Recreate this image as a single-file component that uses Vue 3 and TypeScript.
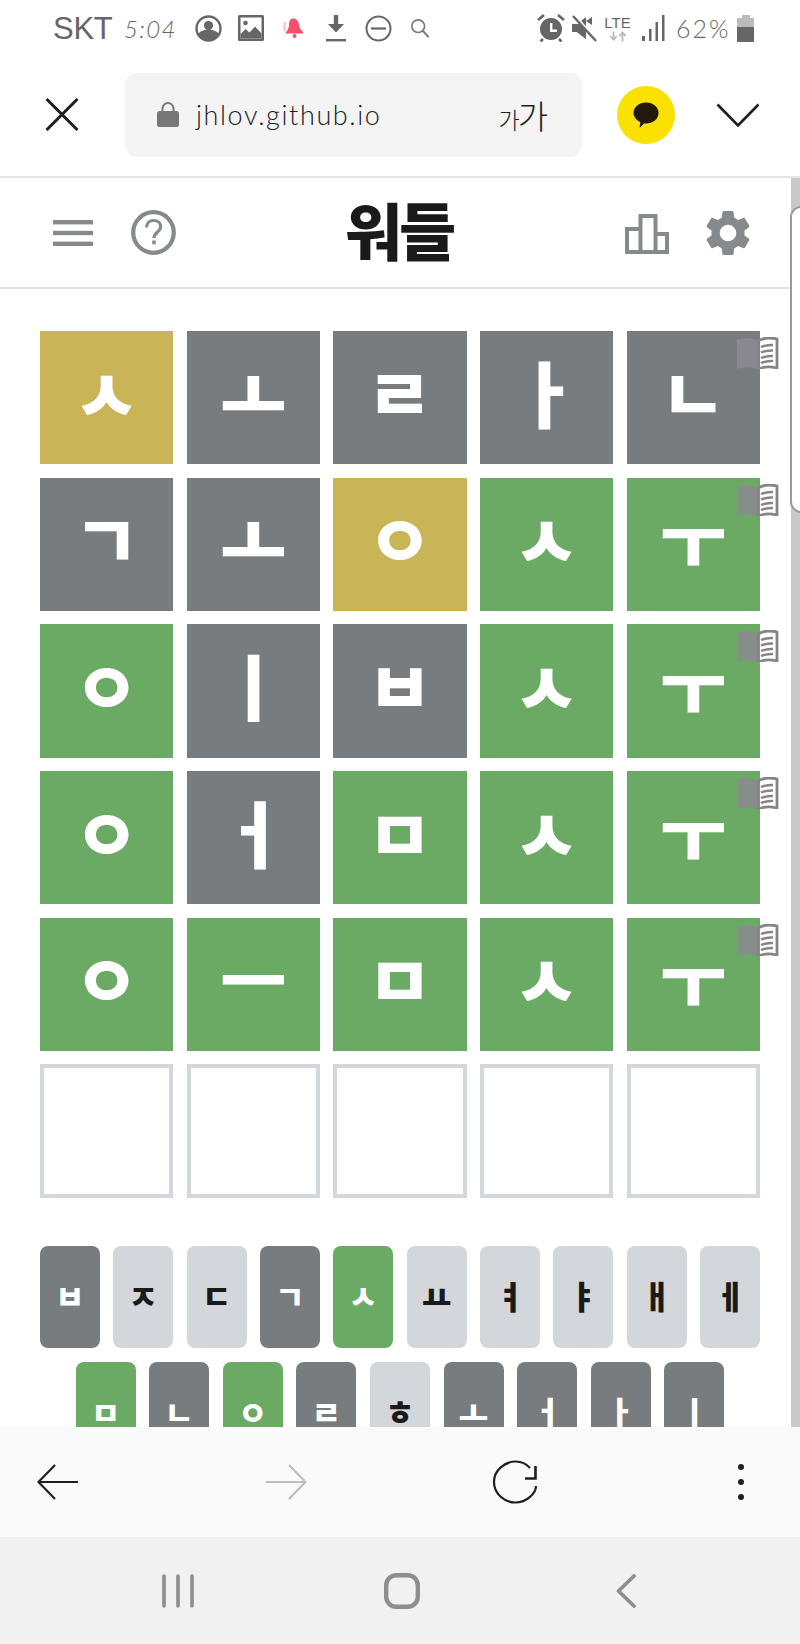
<script setup lang="ts">
type TileState = "present" | "absent" | "correct" | "empty";
type KeyState = "absent" | "correct" | "unused";

interface Tile {
  letter: string;
  state: TileState;
}

const tile = (letter: string, code: string): Tile => ({
  letter,
  state: code === "Y" ? "present" : code === "G" ? "correct" : "absent",
});

const board: Tile[][] = [
  [tile("ㅅ", "Y"), tile("ㅗ", "A"), tile("ㄹ", "A"), tile("ㅏ", "A"), tile("ㄴ", "A")],
  [tile("ㄱ", "A"), tile("ㅗ", "A"), tile("ㅇ", "Y"), tile("ㅅ", "G"), tile("ㅜ", "G")],
  [tile("ㅇ", "G"), tile("ㅣ", "A"), tile("ㅂ", "A"), tile("ㅅ", "G"), tile("ㅜ", "G")],
  [tile("ㅇ", "G"), tile("ㅓ", "A"), tile("ㅁ", "G"), tile("ㅅ", "G"), tile("ㅜ", "G")],
  [tile("ㅇ", "G"), tile("ㅡ", "G"), tile("ㅁ", "G"), tile("ㅅ", "G"), tile("ㅜ", "G")],
  Array.from({ length: 5 }, () => ({ letter: "", state: "empty" as TileState })),
];

const keyRows: { letter: string; state: KeyState }[][] = [
  [
    { letter: "ㅂ", state: "absent" },
    { letter: "ㅈ", state: "unused" },
    { letter: "ㄷ", state: "unused" },
    { letter: "ㄱ", state: "absent" },
    { letter: "ㅅ", state: "correct" },
    { letter: "ㅛ", state: "unused" },
    { letter: "ㅕ", state: "unused" },
    { letter: "ㅑ", state: "unused" },
    { letter: "ㅐ", state: "unused" },
    { letter: "ㅔ", state: "unused" },
  ],
  [
    { letter: "ㅁ", state: "correct" },
    { letter: "ㄴ", state: "absent" },
    { letter: "ㅇ", state: "correct" },
    { letter: "ㄹ", state: "absent" },
    { letter: "ㅎ", state: "unused" },
    { letter: "ㅗ", state: "absent" },
    { letter: "ㅓ", state: "absent" },
    { letter: "ㅏ", state: "absent" },
    { letter: "ㅣ", state: "absent" },
  ],
];
</script>

<template>
  <div class="phone">
    <div class="status-bar">
      <span class="carrier">SKT</span>
      <span class="clock">5:04</span>
      <svg class="st-person" viewBox="0 0 27 27">
        <circle cx="13.5" cy="13.5" r="12" fill="none" stroke="#666" stroke-width="2.4" />
        <circle cx="13.5" cy="10.5" r="4.6" fill="#666" />
        <path d="M3 19c3-3.5 7-4.5 10.500-4.500S21 15.500 24 19c-2 4-6 7-10.500 7S5 23 3 19z" fill="#666" />
      </svg>
      <svg class="st-image" viewBox="0 0 26 26">
        <rect width="26" height="26" rx="1.500" fill="#666" />
        <rect x="2.500" y="2.500" width="21" height="21" fill="#fff" />
        <circle cx="7.500" cy="8" r="2.300" fill="#666" />
        <path d="M2.500 19l5-5 4 3.500 5.500-6 6.500 7v5h-21z" fill="#666" />
      </svg>
      <svg class="st-bell" viewBox="0 0 22 22">
        <path d="M10 1.500c3.500 0 5.500 2.500 6 6 .4 3 1.500 5 4 7.500v1.500H3V15c2-2 2.800-4.500 3-7.500.2-3.500 1-6 4-6z" fill="#f6526f" />
        <circle cx="11.500" cy="19" r="2" fill="#f6526f" />
        <path d="M2.500 5C1 8 1 11 2 14" fill="none" stroke="#fac0ca" stroke-width="2" />
      </svg>
      <svg class="st-download" viewBox="0 0 20 27">
        <path d="M7.800 0h4.400v9H18l-8 8.500L2 9h5.800z" fill="#666" />
        <rect y="24" width="20" height="2.400" fill="#666" />
      </svg>
      <svg class="st-minus" viewBox="0 0 27 27">
        <circle cx="13.500" cy="13.500" r="12" fill="none" stroke="#666" stroke-width="2" />
        <rect x="6" y="12.400" width="15" height="2.200" fill="#666" />
      </svg>
      <svg class="st-search" viewBox="0 0 22 22">
        <circle cx="9" cy="9" r="7" fill="none" stroke="#777" stroke-width="1.800" />
        <path d="M14 14l6.500 7" fill="none" stroke="#777" stroke-width="2.200" />
      </svg>
      <span class="status-spacer"></span>
      <svg class="st-alarm" viewBox="0 0 28 28">
        <circle cx="14" cy="15" r="11" fill="#666" />
        <path d="M13 9h2.400v6.500H20v2.400h-7z" fill="#fff" />
        <path d="M1 6l6-5M27 6l-6-5M6 25l-2.500 2.500M22 25l2.500 2.500" stroke="#666" stroke-width="2.600" fill="none" />
      </svg>
      <svg class="st-mute" viewBox="0 0 25 27">
        <path d="M0 9h5l9-7v22l-9-7H0z" fill="#666" />
        <path d="M2 1l21 25" stroke="#fff" stroke-width="5" />
        <path d="M1 1l23 25" stroke="#666" stroke-width="2.400" />
        <path d="M14 6l6-4v8z" fill="#666" />
        <path d="M1 9h7l6 7v8l-9-7H1z" fill="#666" />
      </svg>
      <div class="st-lte">
        <span class="lte-text">LTE</span>
        <svg viewBox="0 0 20 11" class="lte-arrows">
          <path d="M5 0v7M1.500 5l3.500 4 3.500-4" fill="none" stroke="#bbb" stroke-width="2" />
          <path d="M15 11V3M11.500 5L15 1l3.500 4" fill="none" stroke="#bbb" stroke-width="2" />
        </svg>
      </div>
      <svg class="st-signal" viewBox="0 0 23 26">
        <rect x="0" y="21" width="3" height="5" fill="#666" />
        <rect x="7" y="14" width="2.500" height="12" fill="#666" />
        <rect x="13.500" y="7" width="2.500" height="19" fill="#666" />
        <rect x="20" y="0" width="2.500" height="26" fill="#666" />
      </svg>
      <span class="battery-text">62%</span>
      <div class="battery">
        <span class="battery-cap"></span>
        <span class="battery-empty"></span>
        <span class="battery-fill"></span>
      </div>
    </div>

    <div class="browser-bar">
      <svg class="close-icon" viewBox="0 0 34 33">
        <path d="M1.500 1l31 31M32.500 1l-31 31" fill="none" stroke="#1f1f1f" stroke-width="3" />
      </svg>
      <div class="url-box">
        <svg class="lock-icon" viewBox="0 0 22 25">
          <path d="M5.500 10V6.500a5.500 5.500 0 0 1 11 0V10" fill="none" stroke="#777" stroke-width="2" />
          <rect y="9" width="22" height="16" rx="2.500" fill="#777" />
        </svg>
        <span class="url-text">jhlov.github.io</span>
        <span class="font-size"><span class="font-size-small">가</span>가</span>
      </div>
      <div class="kakao">
        <svg viewBox="0 0 28 28">
          <path d="M14 1.500c7 0 12.500 4.500 12.500 10.500S21 22.500 14 22.500l-2 0-4.500 4.500.8-6C4 19 1.500 15.500 1.500 12 1.500 6 7 1.500 14 1.500z" fill="#211a0c" />
        </svg>
      </div>
      <svg class="chevron-icon" viewBox="0 0 44 24">
        <path d="M1.500 1.500L22 22.500 42.500 1.500" fill="none" stroke="#1f1f1f" stroke-width="2.600" />
      </svg>
    </div>

    <div class="viewport">
      <div class="page">
        <header class="game-header">
          <div class="header-side">
            <svg class="menu-icon" viewBox="0 0 40 26">
              <rect width="40" height="4.400" fill="#878a8c" />
              <rect y="10.800" width="40" height="4.400" fill="#878a8c" />
              <rect y="21.600" width="40" height="4.400" fill="#878a8c" />
            </svg>
            <svg class="help-icon" viewBox="0 0 45 45">
              <circle cx="22.500" cy="22.500" r="20.300" fill="none" stroke="#878a8c" stroke-width="4.200" />
              <path d="M15.500 17.500c0-4.500 3-7 7.200-7 4 0 7 2.500 7 6 0 5.500-6.700 5.500-6.700 11.500" fill="none" stroke="#878a8c" stroke-width="3.200" />
              <rect x="21.200" y="30.500" width="3.600" height="3.800" fill="#878a8c" />
            </svg>
          </div>
          <h1 class="title">워들</h1>
          <div class="header-side header-right">
            <svg class="stats-icon" viewBox="0 0 44 40">
              <path d="M2 38V15h13.500v23zM15.500 38V2h15v36zM30.500 38V20H42v18z" fill="none" stroke="#878a8c" stroke-width="4" />
            </svg>
            <svg class="gear-icon" viewBox="2.400 2.400 19.200 19.200">
              <path d="M19.140 12.940c.04-.3.06-.61.06-.94 0-.32-.02-.64-.07-.94l2.030-1.580c.18-.14.23-.41.12-.61l-1.920-3.320c-.12-.22-.37-.29-.59-.22l-2.390.96c-.5-.38-1.030-.7-1.620-.94L14.400 2.810c-.04-.24-.24-.41-.48-.41h-3.840c-.24 0-.43.17-.47.41L9.250 5.350C8.660 5.590 8.120 5.920 7.630 6.290L5.240 5.330c-.22-.08-.47 0-.59.22L2.740 8.870C2.620 9.080 2.660 9.340 2.860 9.480l2.030 1.580C4.840 11.360 4.800 11.690 4.800 12s.02.64.07.94l-2.030 1.580c-.18.14-.23.41-.12.61l1.920 3.320c.12.22.37.29.59.22l2.390-.96c.5.38 1.030.7 1.620.94l.36 2.540c.05.24.24.41.48.41h3.840c.24 0 .44-.17.47-.41l.36-2.540c.59-.24 1.130-.56 1.620-.94l2.390.96c.22.08.47 0 .59-.22l1.920-3.320c.12-.22.07-.47-.12-.61l-2.010-1.580zM12 15.600c-1.980 0-3.600-1.620-3.600-3.600s1.620-3.600 3.600-3.600 3.600 1.620 3.600 3.600-1.620 3.600-3.600 3.600z" fill="#878a8c" />
            </svg>
          </div>
        </header>

        <div class="board">
          <div v-for="(row, r) in board" :key="r" class="board-row">
            <div v-for="(cell, c) in row" :key="c" class="tile" :class="cell.state">
              {{ cell.letter }}
            </div>
            <svg v-if="r < 5" class="book" viewBox="0 0 42 32">
              <path d="M0 3c6-2.500 14-2.500 20 0v29c-6-2-14-2-20 0z" fill="#8b8b90" opacity="0.85" />
              <path d="M21 4c5-3 13-3.500 19-2v29c-6-1.500-14-1-19 1z" fill="none" stroke="#858585" stroke-width="2.800" />
              <path d="M24 10c4-1.800 8-2.200 12-2M24 15.500c4-1.800 8-2.200 12-2M24 21c4-1.800 8-2.200 12-2M24 26c4-1.800 8-2.200 12-2" fill="none" stroke="#858585" stroke-width="2.400" />
            </svg>
          </div>
        </div>

        <div class="keyboard">
          <div v-for="(row, r) in keyRows" :key="r" class="key-row">
            <div v-for="key in row" :key="key.letter" class="key" :class="key.state">
              {{ key.letter }}
            </div>
          </div>
        </div>
      </div>

      <div class="scroll-track"></div>
      <div class="edge-handle"></div>
    </div>

    <nav class="browser-nav">
      <svg class="nav-arrow" viewBox="0 0 42 36">
        <path d="M18 1L1.500 18 18 35M1.500 18H41" fill="none" stroke="#1f1f1f" stroke-width="2.200" />
      </svg>
      <svg class="nav-arrow" viewBox="0 0 42 36">
        <path d="M24 1l16.500 17L24 35M40.500 18H1" fill="none" stroke="#bdbdbd" stroke-width="2.200" />
      </svg>
      <svg class="nav-reload" viewBox="0 0 46 44">
        <path d="M38 8C34 3.500 29 1.500 24 1.500 12.500 1.500 2 10.500 2 22s10 20.500 21.500 20.500S44 33 44 26" fill="none" stroke="#1f1f1f" stroke-width="2.200" />
        <path d="M43.500 6v12.500H33" fill="none" stroke="#1f1f1f" stroke-width="2.600" />
      </svg>
      <div class="nav-dots"><span></span><span></span><span></span></div>
    </nav>

    <nav class="system-nav">
      <svg class="sys-recent" viewBox="0 0 32 34">
        <path d="M2 2v30M16 2v30M30 2v30" fill="none" stroke="#8e8e8e" stroke-width="3.600" stroke-linecap="round" />
      </svg>
      <svg class="sys-home" viewBox="0 0 36 36">
        <rect x="2.200" y="2.200" width="31.600" height="31.600" rx="10" fill="none" stroke="#8e8e8e" stroke-width="4.400" />
      </svg>
      <svg class="sys-back" viewBox="0 0 20 34">
        <path d="M18 2L2.500 17 18 32" fill="none" stroke="#8e8e8e" stroke-width="3.800" stroke-linecap="round" stroke-linejoin="round" />
      </svg>
    </nav>
  </div>
</template>

<style scoped>
.phone {
  width: 800px;
  height: 1644px;
  display: flex;
  flex-direction: column;
  overflow: hidden;
  background: #fff;
  font-family: "Noto Sans CJK KR", "Noto Sans", sans-serif;
}

.status-bar {
  height: 56px;
  flex: none;
  display: flex;
  align-items: center;
  padding: 0 46px 0 53px;
  box-sizing: border-box;
  color: #666;
}

.status-bar svg {
  flex: none;
  display: block;
}

.carrier {
  font-family: "Liberation Sans", sans-serif;
  font-size: 31px;
  letter-spacing: -0.3px;
  width: 60px;
  margin-top: 1px;
}

.clock {
  font-family: "Lato", sans-serif;
  font-weight: 300;
  font-style: italic;
  font-size: 24px;
  letter-spacing: 1.3px;
  width: 55px;
  margin-left: 11px;
}

.st-person {
  width: 27px;
  height: 27px;
  margin-left: 16px;
}

.st-image {
  width: 26px;
  height: 26px;
  margin-left: 16px;
}

.st-bell {
  width: 22px;
  height: 22px;
  margin-left: 19px;
}

.st-download {
  width: 20px;
  height: 27px;
  margin-left: 21px;
}

.st-minus {
  width: 27px;
  height: 27px;
  margin-left: 19px;
}

.st-search {
  width: 20px;
  height: 20px;
  margin-left: 18px;
}

.status-spacer {
  flex: 1;
}

.st-alarm {
  width: 28px;
  height: 28px;
}

.st-mute {
  width: 25px;
  height: 27px;
  margin-left: 7px;
}

.st-lte {
  width: 25px;
  margin-left: 8px;
  display: flex;
  flex-direction: column;
  align-items: center;
}

.lte-text {
  font-family: "Liberation Sans", sans-serif;
  font-size: 15px;
  line-height: 15px;
  color: #666;
}

.lte-arrows {
  width: 18px;
  height: 11px;
  margin-top: 1px;
}

.st-signal {
  width: 23px;
  height: 26px;
  margin-left: 12px;
}

.battery-text {
  font-family: "Lato", sans-serif;
  font-weight: 300;
  font-size: 25px;
  letter-spacing: 2px;
  width: 51px;
  margin-left: 11px;
}

.battery {
  width: 17px;
  height: 27px;
  margin-left: 10px;
  display: flex;
  flex-direction: column;
  align-items: center;
}

.battery-cap {
  width: 8px;
  height: 3px;
  background: #bbb;
}

.battery-empty {
  width: 100%;
  height: 9px;
  background: #bbb;
}

.battery-fill {
  width: 100%;
  flex: 1;
  background: #666;
}

.browser-bar {
  height: 122px;
  flex: none;
  display: flex;
  align-items: center;
  box-sizing: border-box;
  padding-bottom: 3px;
  border-bottom: 2px solid #e4e4e4;
}

.close-icon {
  width: 34px;
  height: 33px;
  margin-left: 45px;
  flex: none;
}

.url-box {
  width: 457px;
  height: 84px;
  margin-left: 46px;
  background: #f4f4f5;
  border-radius: 12px;
  display: flex;
  align-items: center;
  padding: 0 36px 0 32px;
  box-sizing: border-box;
}

.lock-icon {
  width: 22px;
  height: 25px;
  flex: none;
}

.url-text {
  font-family: "Lato", sans-serif;
  font-weight: 300;
  font-size: 27px;
  letter-spacing: 1.6px;
  color: #1c1c1c;
  margin-left: 17px;
  flex: 1;
}

.font-size {
  font-size: 33px;
  font-weight: 300;
  letter-spacing: -2px;
  color: #222;
}

.font-size-small {
  font-size: 23px;
}

.kakao {
  width: 58px;
  height: 58px;
  margin-left: 35px;
  border-radius: 50%;
  background: #fae100;
  display: flex;
  align-items: center;
  justify-content: center;
}

.kakao svg {
  width: 28px;
  height: 28px;
}

.chevron-icon {
  width: 44px;
  height: 24px;
  margin-left: 41px;
}

.viewport {
  flex: 1;
  min-height: 0;
  display: flex;
  position: relative;
  overflow: hidden;
}

.page {
  width: 791px;
  flex: none;
}

.scroll-track {
  flex: 1;
  background: #c9c9c9;
}

.edge-handle {
  position: absolute;
  right: -12px;
  top: 28px;
  width: 22px;
  height: 307px;
  box-sizing: border-box;
  background: #fff;
  border: 2px solid #9a9a9a;
  border-radius: 14px;
}

.game-header {
  height: 111px;
  box-sizing: border-box;
  border-bottom: 2px solid #e2e2e2;
  display: grid;
  grid-template-columns: 1fr auto 1fr;
  align-items: center;
  padding: 0 41px 0 53px;
}

.header-side {
  display: flex;
  align-items: center;
}

.header-right {
  justify-content: flex-end;
}

.menu-icon {
  width: 40px;
  height: 26px;
}

.help-icon {
  width: 45px;
  height: 45px;
  margin-left: 38px;
}

.stats-icon {
  width: 44px;
  height: 40px;
  margin-top: 2px;
}

.gear-icon {
  width: 44px;
  height: 44px;
  margin-left: 37px;
}

.title {
  margin: 0 5px 8px 0;
  font-size: 62px;
  font-weight: 900;
  line-height: 1;
  color: #1a1a1b;
  letter-spacing: -3px;
}

.board {
  width: 720px;
  margin: 42px 0 0 40px;
  display: flex;
  flex-direction: column;
  gap: 13.33px;
}

.board-row {
  display: grid;
  grid-template-columns: repeat(5, 1fr);
  gap: 13.33px;
  position: relative;
}

.tile {
  height: 133.33px;
  box-sizing: border-box;
  display: flex;
  align-items: center;
  justify-content: center;
  padding-bottom: 14px;
  font-size: 72px;
  font-weight: 900;
  line-height: 1;
  color: #fff;
}

.tile.absent {
  background: #787c7e;
}

.tile.present {
  background: #c9b458;
}

.tile.correct {
  background: #6aaa64;
}

.tile.empty {
  border: 4px solid #d3d6da;
}

.book {
  position: absolute;
  right: -19px;
  top: 6px;
  width: 42px;
  height: 32px;
}

.keyboard {
  width: 720px;
  margin: 48px 0 0 40px;
  display: flex;
  flex-direction: column;
  gap: 14px;
}

.key-row {
  display: flex;
  justify-content: center;
  gap: 13.33px;
}

.key-row:last-child {
  gap: 13.6px;
}

.key {
  width: 60px;
  height: 102px;
  flex: none;
  border-radius: 8px;
  display: flex;
  align-items: center;
  justify-content: center;
  padding-bottom: 4px;
  box-sizing: border-box;
  font-size: 32px;
  font-weight: 900;
  line-height: 1;
  color: #fff;
}

.key.absent {
  background: #787c7e;
}

.key.correct {
  background: #6aaa64;
}

.key.unused {
  background: #d3d6da;
  color: #1a1a1b;
}

.browser-nav {
  height: 110px;
  flex: none;
  background: #fafafa;
  display: flex;
  align-items: center;
  padding-left: 37px;
}

.nav-arrow {
  width: 42px;
  height: 36px;
  flex: none;
}

.nav-arrow + .nav-arrow {
  margin-left: 186px;
}

.nav-reload {
  width: 46px;
  height: 44px;
  margin-left: 185px;
  flex: none;
}

.nav-dots {
  margin-left: 200px;
  display: flex;
  flex-direction: column;
  gap: 9px;
}

.nav-dots span {
  width: 6px;
  height: 6px;
  border-radius: 50%;
  background: #1f1f1f;
}

.system-nav {
  height: 107px;
  flex: none;
  background: #f1f1f1;
  display: flex;
  align-items: center;
  padding: 0 0 0 162px;
}

.sys-recent {
  width: 32px;
  height: 34px;
}

.sys-home {
  width: 36px;
  height: 36px;
  margin-left: 190px;
}

.sys-back {
  width: 20px;
  height: 34px;
  margin-left: 196px;
}
</style>
